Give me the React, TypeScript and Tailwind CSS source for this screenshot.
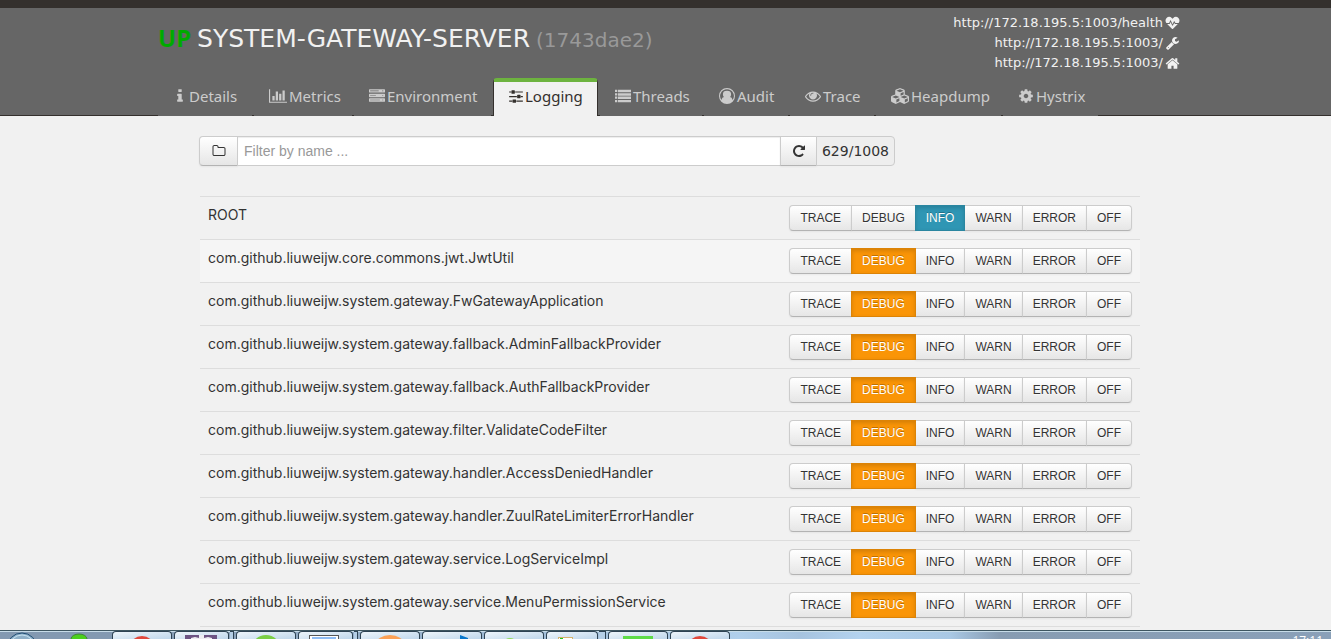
import React from "react";
import { FaCubes, FaHeartbeat } from "react-icons/fa";

function Glyph({ d, w = 1792, className = "h-4 w-4" }: { d: string; w?: number; className?: string }) {
  return (
    <svg viewBox={`0 0 ${w} 1792`} className={`${className} shrink-0`} fill="currentColor" aria-hidden="true">
      <path fillRule="evenodd" d={d} />
    </svg>
  );
}

const paths = {
  info: "M640 1344v128q0 26-19 45t-45 19h-512q-26 0-45-19t-19-45v-128q0-26 19-45t45-19h64v-384h-64q-26 0-45-19t-19-45v-128q0-26 19-45t45-19h384q26 0 45 19t19 45v576h64q26 0 45 19t19 45zm-128-1152v192q0 26-19 45t-45 19h-256q-26 0-45-19t-19-45v-192q0-26 19-45t45-19h256q26 0 45 19t19 45z",
  chart: "M640 896v512h-256v-512h256zm384-512v1024h-256v-1024h256zm1024 1152v128h-2048v-1536h128v1408h1920zm-640-896v768h-256v-768h256zm384-384v1152h-256v-1152h256z",
  server: "M64 128h1664q64 0 64 64v256q0 64-64 64h-1664q-64 0-64-64v-256q0-64 64-64zM128 288v64h960v-64zM1472 288v64h128v-64zM64 640h1664q64 0 64 64v256q0 64-64 64h-1664q-64 0-64-64v-256q0-64 64-64zM128 800v64h640v-64zM1472 800v64h128v-64zM64 1152h1664q64 0 64 64v256q0 64-64 64h-1664q-64 0-64-64v-256q0-64 64-64zM128 1312v64h1088v-64zM1472 1312v64h128v-64z",
  sliders: "M352 1408v128h-352v-128h352zm352-128q26 0 45 19t19 45v256q0 26-19 45t-45 19h-256q-26 0-45-19t-19-45v-256q0-26 19-45t45-19h256zm160-384v128h-864v-128h864zm-640-512v128h-224v-128h224zm1312 1024v128h-736v-128h736zm-960-1152q26 0 45 19t19 45v256q0 26-19 45t-45 19h-256q-26 0-45-19t-19-45v-256q0-26 19-45t45-19h256zm640 512q26 0 45 19t19 45v256q0 26-19 45t-45 19h-256q-26 0-45-19t-19-45v-256q0-26 19-45t45-19h256zm320 128v128h-224v-128h224zm0-512v128h-864v-128h864z",
  list: "M0 192h256v256h-256zM336 192h1456v280h-1456zM0 576h256v256h-256zM336 576h1456v280h-1456zM0 960h256v256h-256zM336 960h1456v280h-1456zM0 1344h256v256h-256zM336 1344h1456v256h-1456z",
  user: "M896 0a896 896 0 1 1 0 1792a896 896 0 1 1 0-1792zM896 128a768 768 0 0 0-620 1222q60-300 280-330q-120-120-120-330q0-380 460-380t460 380q0 210-120 330q220 30 280 330a768 768 0 0 0-620-1222z",
  eye: "M1664 960q-152-236-381-353 61 104 61 225 0 185-131.5 316.5t-316.5 131.5-316.5-131.5-131.5-316.5q0-121 61-225-229 117-381 353 133 205 333.5 326.5t434.5 121.5 434.5-121.5 333.5-326.5zm-720-384q0-20-14-34t-34-14q-125 0-214.5 89.5t-89.5 214.5q0 20 14 34t34 14 34-14 14-34q0-86 61-147t147-61q20 0 34-14t14-34zm848 384q0 34-20 69-140 230-376.5 368.5t-499.5 138.5-499.5-139-376.5-368q-20-35-20-69t20-69q140-229 376.5-368t499.5-139 499.5 139 376.5 368q20 35 20 69z",
  cog: "M1152 896q0-106-75-181t-181-75-181 75-75 181 75 181 181 75 181-75 75-181zm512-109v222q0 12-8 23t-20 13l-185 28q-19 54-39 91 35 50 107 138 10 12 10 25t-9 23q-27 37-99 108t-94 71q-12 0-26-9l-138-108q-44 23-91 38-16 136-29 186-7 28-36 28h-222q-14 0-24.5-8.5t-11.5-21.5l-28-184q-49-16-90-37l-141 107q-10 9-25 9-14 0-25-11-126-114-165-168-7-10-7-23 0-12 8-23 15-21 51-66.5t54-70.5q-27-50-41-99l-183-27q-13-2-21-12.5t-8-23.5v-222q0-12 8-23t19-13l186-28q14-46 39-92-40-57-107-138-10-12-10-24 0-10 9-23 26-36 98.5-107.5t94.5-71.5q13 0 26 10l138 107q44-23 91-38 16-136 29-186 7-28 36-28h222q14 0 24.5 8.5t11.5 21.5l28 184q49 16 90 37l142-107q9-9 24-9 13 0 25 10 129 119 165 170 7 8 7 22 0 12-8 23-15 21-51 66.5t-54 70.5q26 50 41 98l183 28q13 2 21 12.5t8 23.5z",
  wrench: "M448 1472q0-26-19-45t-45-19-45 19-19 45 19 45 45 19 45-19 19-45zm644-420l-682 682q-37 37-90 37-52 0-91-37l-106-108q-38-36-38-90 0-53 38-91l681-681q39 98 114.5 173.5t173.5 114.5zm634-435q0 39-23 106-47 134-164.5 217.5t-258.5 83.5q-185 0-316.5-131.5t-131.5-316.5 131.5-316.5 316.5-131.5q58 0 121.5 16.5t107.5 46.5q16 11 16 28t-16 28l-293 169v224l193 107q5-3 79-48.5t135.5-81 70.5-35.5q15 0 23.5 10t8.5 25z",
  home: "M1472 992v480q0 26-19 45t-45 19h-384v-384h-256v384h-384q-26 0-45-19t-19-45v-480q0-1 .5-3t.5-3l575-474 575 474q1 2 1 6zm223-69l-62 74q-8 9-21 11h-3q-13 0-21-7l-692-577-692 577q-12 8-24 7-13-2-21-11l-62-74q-8-10-7-23.5t11-21.5l719-599q32-26 76-26t76 26l244 204v-195q0-14 9-23t23-9h192q14 0 23 9t9 23v408l219 182q10 8 11 21.5t-7 23.5z",
  repeat: "M1664 256v448q0 26-19 45t-45 19h-448q-42 0-59-40-17-39 14-69l138-138q-148-137-349-137-104 0-198.5 40.5t-163.5 109.5-109.5 163.5-40.5 198.5 40.5 198.5 109.5 163.5 163.5 109.5 198.5 40.5q119 0 225-52t179-147q7-10 23-12 15 0 25 9l137 138q9 8 9.5 20.5t-7.5 22.5q-109 132-264 204.5t-327 72.5q-156 0-298-61t-245-164-164-245-61-298 61-298 164-245 245-164 298-61q147 0 284.5 55.5t244.5 156.5l130-129q29-31 70-14 39 17 39 59z",
  folder: "M1600 1312v-704q0-40-28-68t-68-28h-704q-40 0-68-28t-28-68v-64q0-40-28-68t-68-28h-320q-40 0-68 28t-28 68v960q0 40 28 68t68 28h1216q40 0 68-28t28-68zm128-704v704q0 92-66 158t-158 66h-1216q-92 0-158-66t-66-158v-960q0-92 66-158t158-66h320q92 0 158 66t66 158v32h672q92 0 158 66t66 158z",
};

const tabs = [
  { label: "Details", width: "w-[94px]", icon: <span className="flex w-[14px] justify-center"><Glyph d={paths.info} w={640} className="h-4 w-[6px]" /></span> },
  { label: "Metrics", width: "w-[98px]", icon: <Glyph d={paths.chart} w={2048} className="h-4 w-[18px]" /> },
  { label: "Environment", width: "w-[137px]", icon: <Glyph d={paths.server} /> },
  { label: "Logging", width: "w-[105px]", icon: <Glyph d={paths.sliders} w={1536} className="h-4 w-[14px]" />, active: true },
  { label: "Threads", width: "w-[102px]", icon: <Glyph d={paths.list} /> },
  { label: "Audit", width: "w-[84px]", icon: <Glyph d={paths.user} /> },
  { label: "Trace", width: "w-[84px]", icon: <Glyph d={paths.eye} /> },
  { label: "Heapdump", width: "w-[125px]", icon: <FaCubes className="h-5 w-[18px] shrink-0" /> },
  { label: "Hystrix", width: "w-[95px]", icon: <Glyph d={paths.cog} /> },
];

const links = [
  { text: "http://172.18.195.5:1003/health", icon: <FaHeartbeat className="h-[14px] w-[15px]" /> },
  { text: "http://172.18.195.5:1003/", icon: <Glyph d={paths.wrench} className="h-[14px] w-[15px]" /> },
  { text: "http://172.18.195.5:1003/", icon: <Glyph d={paths.home} className="h-[15px] w-[15px]" /> },
];

const levels = ["TRACE", "DEBUG", "INFO", "WARN", "ERROR", "OFF"];

const loggers = [
  { name: "ROOT", level: "INFO" },
  { name: "com.github.liuweijw.core.commons.jwt.JwtUtil", level: "DEBUG", hovered: true },
  { name: "com.github.liuweijw.system.gateway.FwGatewayApplication", level: "DEBUG" },
  { name: "com.github.liuweijw.system.gateway.fallback.AdminFallbackProvider", level: "DEBUG" },
  { name: "com.github.liuweijw.system.gateway.fallback.AuthFallbackProvider", level: "DEBUG" },
  { name: "com.github.liuweijw.system.gateway.filter.ValidateCodeFilter", level: "DEBUG" },
  { name: "com.github.liuweijw.system.gateway.handler.AccessDeniedHandler", level: "DEBUG" },
  { name: "com.github.liuweijw.system.gateway.handler.ZuulRateLimiterErrorHandler", level: "DEBUG" },
  { name: "com.github.liuweijw.system.gateway.service.LogServiceImpl", level: "DEBUG" },
  { name: "com.github.liuweijw.system.gateway.service.MenuPermissionService", level: "DEBUG" },
];

const plainButton =
  "border-[#cccccc] border-b-[#b3b3b3] bg-gradient-to-b from-white to-[#e6e6e6] text-[#333333] [text-shadow:0_1px_1px_rgba(255,255,255,0.75)] shadow-[0_1px_2px_rgba(0,0,0,0.05)]";
const activeButton: Record<string, string> = {
  INFO: "z-10 border-[#2a86a0] bg-[#2f96b4] text-white [text-shadow:0_-1px_0_rgba(0,0,0,0.25)] shadow-[inset_0_2px_4px_rgba(0,0,0,0.15)]",
  DEBUG: "z-10 border-[#dc8306] bg-[#fa9507] text-white [text-shadow:0_-1px_0_rgba(0,0,0,0.25)] shadow-[inset_0_2px_4px_rgba(0,0,0,0.15)]",
};

function LevelButtons({ current }: { current: string }) {
  return (
    <div className="flex justify-end">
      {levels.map((level) => (
        <button
          key={level}
          type="button"
          aria-pressed={level === current}
          className={`relative -ml-px h-[26px] border px-[10px] font-['Liberation_Sans',sans-serif] text-[12px] leading-5 first:rounded-l last:rounded-r ${level === current ? activeButton[level] : plainButton}`}
        >
          {level}
        </button>
      ))}
    </div>
  );
}

const tasks = [
  { width: "w-[60px]", icon: <circle cx="29" cy="17" r="13" fill="#e0483c" /> },
  { width: "w-[55px]", stacked: true, icon: <><path d="M10 3h32v6H10z" fill="#6d5483" /><path d="M16 9V6l4-1 4 1V3h5v3l4-1 4 1v3z" fill="#eeeef2" /></> },
  { width: "w-[60px]", icon: <circle cx="29" cy="18" r="15" fill="#7bcf46" /> },
  { width: "w-[55px]", stacked: true, icon: <><path d="M10 3h30v6H10z" fill="#555555" /><path d="M11 4h28v5H11z" fill="#ffffff" /><path d="M13 5h24v4H13z" fill="#8ebcf4" /></> },
  { width: "w-[60px]", icon: <ellipse cx="29" cy="12" rx="14" ry="9" fill="#fba156" /> },
  { width: "w-[60px]", icon: <path d="M37 3l8 3v3h-8zM28 7h3v2h-3z" fill="#0876ca" /> },
  { width: "w-[60px]", icon: <ellipse cx="25" cy="10" rx="6" ry="4" fill="#91dc55" /> },
  { width: "w-[52px]", stacked: true, icon: <><path d="M11 5h15v4H11z" fill="#d5b36d" /><path d="M12 6h13v3H12z" fill="#ffffff" /><path d="M13 6h3v3h-3z" fill="#22c722" /></> },
  { width: "w-[60px]", icon: <path d="M14 4h30v5H14z" fill="#5edb48" /> },
  { width: "w-[60px]", icon: <circle cx="29" cy="17" r="13" fill="#e0483c" /> },
];

function Taskbar() {
  return (
    <footer className="flex h-[9px] shrink-0 items-start overflow-hidden border-t border-[#3d5560] bg-[linear-gradient(90deg,#8399b1_0,#8399b1_110px,#b0cfeb_740px,#a6c3df_800px,#b3d2ee_860px,#a9c8e4_950px,#879cb2_1000px,#8aa0b8_100%)] shadow-[inset_0_1px_0_#c7dce8]">
      <svg viewBox="0 0 112 9" className="h-[9px] w-[112px] shrink-0" aria-hidden="true">
        <circle cx="22" cy="17" r="15" fill="#8fb0c8" stroke="#1f4d73" />
        <circle cx="22" cy="17" r="13" fill="none" stroke="#c5e2f1" />
        <ellipse cx="79" cy="8" rx="8" ry="5" fill="#4cd01d" stroke="#42843a" />
      </svg>
      <div className="flex gap-[2px]">
        {tasks.map((task, i) => (
          <div key={i} className="flex w-[60px] shrink-0 gap-px">
            <div className={`h-[9px] shrink-0 overflow-hidden rounded-t-sm border-x border-t border-[#2e4353] bg-gradient-to-br from-[#edf5fb] to-[#bdd5ea] ${task.width}`}>
              <svg viewBox="0 0 60 9" className="h-[9px] w-[60px]" aria-hidden="true">{task.icon}</svg>
            </div>
            {task.stacked && <div className="h-[9px] flex-1 border-r border-t border-[#2e4353] bg-[#b5cfe6]" />}
          </div>
        ))}
      </div>
      <time className="ml-auto mr-2 mt-[4px] font-['Open_Sans',sans-serif] text-[12px] leading-[12px] text-white">17:11</time>
    </footer>
  );
}

export default function App() {
  return (
    <div className="flex h-screen flex-col overflow-hidden bg-[#f1f1f1] font-['Inter',sans-serif] text-[14px] leading-5 text-[#333333]">
      <header className="shrink-0 border-t-8 border-[#34302d] bg-[#666666] pl-[7px]">
        <div className="mx-auto flex h-[70px] max-w-[1022px] items-start justify-between">
          <h1 className="flex items-baseline gap-[6px] whitespace-nowrap pt-[10px] font-['DejaVu_Sans',sans-serif] text-[25px] leading-10 text-[#f1f1f1]">
            <span className="font-['Noto_Sans',sans-serif] text-[24px] font-bold text-[#00aa00]">UP</span>
            <span>SYSTEM-GATEWAY-SERVER</span>
            <small className="text-[20px] text-[#999999]">(1743dae2)</small>
          </h1>
          <ul className="pt-[5px] font-['DejaVu_Sans',sans-serif] text-[13px] text-[#f1f1f1]">
            {links.map((link, i) => (
              <li key={i}>
                <a href={link.text} className="flex items-center justify-end gap-[2px]">
                  {link.text}
                  {link.icon}
                </a>
              </li>
            ))}
          </ul>
        </div>
        <div className="-ml-[7px] bg-[linear-gradient(to_top,#34302d_1px,transparent_1px)] pl-[7px]">
          <nav className="mx-auto flex h-[38px] max-w-[1022px] gap-[2px] font-['Noto_Sans',sans-serif] text-[15px]">
            {tabs.map((tab) => (
              <a
                key={tab.label}
                href={`#${tab.label.toLowerCase()}`}
                aria-current={tab.active ? "page" : undefined}
                className={`flex shrink-0 items-center gap-[2px] whitespace-nowrap pl-[15px] ${tab.width} ${tab.active ? "rounded-t border-x border-t-4 border-x-[#34302d] border-t-[#6db33f] bg-[#f1f1f1] pb-[6px] text-[#34302d]" : "bg-[#666666] pb-[2px] text-[#cccccc]"}`}
              >
                {tab.icon}
                {tab.label}
              </a>
            ))}
          </nav>
        </div>
      </header>

      <main className="min-h-0 flex-1 overflow-hidden pl-[7px]">
        <div className="mx-auto max-w-[1022px] pl-[42px] pr-10 pt-5">
          <form className="-ml-px flex w-[696px] max-w-full">
            <button type="button" aria-label="Show packages" className={`flex h-[30px] w-[39px] shrink-0 items-center justify-center rounded-l border ${plainButton}`}>
              <Glyph d={paths.folder} className="h-[14px] w-[14px]" />
            </button>
            <input
              aria-label="Filter by name"
              placeholder="Filter by name ..."
              className="-ml-px h-[30px] min-w-0 flex-1 border border-[#cccccc] bg-white px-[6px] font-['Liberation_Sans',sans-serif] text-[14px] shadow-[inset_0_1px_1px_rgba(0,0,0,0.075)] outline-none placeholder:text-[#999999]"
            />
            <button type="button" aria-label="Refresh" className={`-ml-px flex h-[30px] w-[37px] shrink-0 items-center justify-center border ${plainButton}`}>
              <Glyph d={paths.repeat} className="h-[14px] w-[14px]" />
            </button>
            <span className="-ml-px flex h-[30px] w-[79px] shrink-0 items-center justify-center rounded-r border border-[#cccccc] bg-[#eeeeee] font-['DejaVu_Sans',sans-serif]">629/1008</span>
          </form>

          <table className="mt-[30px] w-full border-collapse">
            <tbody>
              {loggers.map((logger) => (
                <tr key={logger.name} className={`border-y border-[#dddddd] ${logger.hovered ? "bg-[#f5f5f5]" : ""}`}>
                  <td className="p-2 text-left align-top">{logger.name}</td>
                  <td className="p-2 align-top"><LevelButtons current={logger.level} /></td>
                </tr>
              ))}
            </tbody>
          </table>
        </div>
      </main>
      <Taskbar />
    </div>
  );
}
